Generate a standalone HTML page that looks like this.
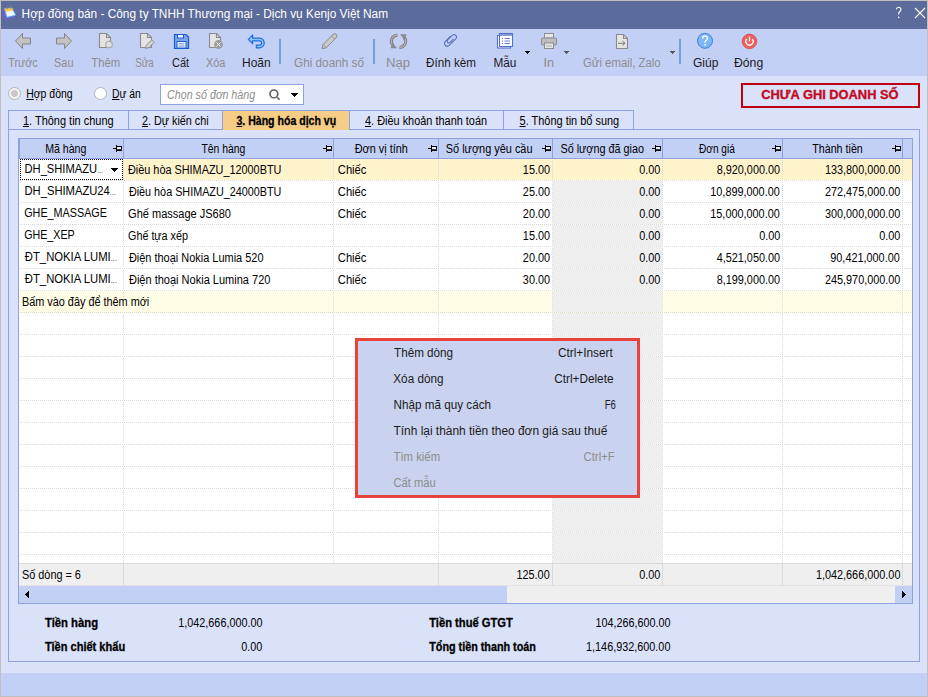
<!DOCTYPE html>
<html><head><meta charset="utf-8"><style>
html,body{margin:0;padding:0;width:928px;height:697px;overflow:hidden;background:#fff;}
body{position:relative;font-family:"Liberation Sans", sans-serif;}
.r{position:absolute;}
.t{position:absolute;white-space:nowrap;font-family:"Liberation Sans", sans-serif;}
u{text-decoration:underline;text-underline-offset:1px;}
</style></head><body>
<div class="r" style="left:0px;top:0px;width:928px;height:697px;background:#bfbfbf;"></div>
<div class="r" style="left:1px;top:1px;width:926px;height:28px;background:#5b6b9b;"></div>
<div class="r" style="left:1px;top:29px;width:926px;height:47px;background:#c3d0f6;"></div>
<div class="r" style="left:1px;top:76px;width:926px;height:597px;background:#dae2f9;"></div>
<div class="r" style="left:1px;top:673px;width:926px;height:23px;background:#c3d0f6;"></div>
<svg class="r" style="left:0px;top:0px" width="20" height="22" viewBox="0 0 20 22">
<path d="M3.3 8.6 L3.6 17.2 L6 19.9 L15.2 17.6 L12.5 15.5 Z" fill="#6f5bd8"/>
<path d="M4.4 8.5 L11.9 7.7 L16 15.3 L6.8 17.4 Z" fill="#eef4ff" stroke="#45a2ee" stroke-width="0.9"/>
<path d="M4.4 8.5 L11.9 7.7 L13.4 10.6 L5.6 11.8 Z" fill="#f6c842"/>
<path d="M6.2 9.2 Q5.6 5.4 7 5.4 Q8.2 5.5 7.7 8.9 M10.2 8.7 Q9.8 5 11.2 5.1 Q12.4 5.3 11.9 8.4" stroke="#7a7a7a" stroke-width="0.8" fill="none"/>
</svg>
<div class="t" id="tbfddfa17bc" style="left:22px;top:6.84px;font-size:12px;line-height:14px;color:#fff;font-weight:normal;transform:translateX(-0.39px) scaleX(0.9870);transform-origin:0 0;">Hợp đồng bán - Công ty TNHH Thương mại - Dịch vụ Kenjo Việt Nam</div>
<svg class="r" style="left:890px;top:0px" width="16" height="24" viewBox="890 0 16 24"><path d="M896.2 9.4 Q896.6 7.2 898.7 7.2 Q900.9 7.2 900.9 9.4 Q900.9 10.9 899.6 11.8 Q898.6 12.6 898.6 14.6" fill="none" stroke="#fff" stroke-width="1.1"/><rect x="898" y="16.6" width="1.3" height="1.5" fill="#fff"/></svg>
<svg class="r" style="left:914px;top:7px" width="12" height="12" viewBox="0 0 12 12"><path d="M1 1 L11 11 M11 1 L1 11" stroke="#fff" stroke-width="1.1"/></svg>
<div class="t" id="t17dea0146b" style="left:8px;top:55.84px;font-size:12px;line-height:14px;color:#8c8c8c;font-weight:normal;transform:translateX(0.30px) scaleX(0.8969);transform-origin:0 0;">Trước</div>
<div class="t" id="t330e1b755b" style="left:55px;top:55.84px;font-size:12px;line-height:14px;color:#8c8c8c;font-weight:normal;transform:translateX(-0.91px) scaleX(0.9100);transform-origin:0 0;">Sau</div>
<div class="t" id="tec5632794b" style="left:91px;top:55.84px;font-size:12px;line-height:14px;color:#8c8c8c;font-weight:normal;transform:translateX(0.30px) scaleX(0.9400);transform-origin:0 0;">Thêm</div>
<div class="t" id="t84d1a2b94b" style="left:136px;top:55.84px;font-size:12px;line-height:14px;color:#8c8c8c;font-weight:normal;transform:translateX(-0.82px) scaleX(0.8182);transform-origin:0 0;">Sửa</div>
<div class="t" id="tec8a192eca" style="left:172px;top:55.84px;font-size:12px;line-height:14px;color:#1a1a1a;font-weight:normal;transform:translateX(0.00px) scaleX(0.9105);transform-origin:0 0;">Cất</div>
<div class="t" id="t4f94497f70" style="left:206px;top:55.84px;font-size:12px;line-height:14px;color:#8c8c8c;font-weight:normal;transform:translateX(0.00px) scaleX(0.9048);transform-origin:0 0;">Xóa</div>
<div class="t" id="t210c2308ae" style="left:242px;top:55.84px;font-size:12px;line-height:14px;color:#1a1a1a;font-weight:normal;transform:translateX(0.00px) scaleX(1.0000);transform-origin:0 0;">Hoãn</div>
<div class="t" id="t3c45f9a0dc" style="left:294px;top:55.84px;font-size:12px;line-height:14px;color:#8c8c8c;font-weight:normal;transform:translateX(0.00px) scaleX(0.9803);transform-origin:0 0;">Ghi doanh số</div>
<div class="t" id="t939bacf14b" style="left:387px;top:55.84px;font-size:12px;line-height:14px;color:#8c8c8c;font-weight:normal;transform:translateX(-1.10px) scaleX(1.1000);transform-origin:0 0;">Nạp</div>
<div class="t" id="te5e6683cfd" style="left:426px;top:55.84px;font-size:12px;line-height:14px;color:#1a1a1a;font-weight:normal;transform:translateX(0.00px) scaleX(0.9745);transform-origin:0 0;">Đính kèm</div>
<div class="t" id="tc5a432ef92" style="left:493px;top:55.84px;font-size:12px;line-height:14px;color:#1a1a1a;font-weight:normal;transform:translateX(0.40px) scaleX(0.9826);transform-origin:0 0;">Mẫu</div>
<div class="t" id="t4fc5486b48" style="left:544px;top:55.84px;font-size:12px;line-height:14px;color:#8c8c8c;font-weight:normal;transform:translateX(-0.45px) scaleX(1.0500);transform-origin:0 0;">In</div>
<div class="t" id="t0ea93c2dd7" style="left:583px;top:55.84px;font-size:12px;line-height:14px;color:#8c8c8c;font-weight:normal;transform:translateX(0.00px) scaleX(0.9463);transform-origin:0 0;">Gửi email, Zalo</div>
<div class="t" id="teecc97d36f" style="left:693px;top:55.84px;font-size:12px;line-height:14px;color:#1a1a1a;font-weight:normal;transform:translateX(0.00px) scaleX(1.0000);transform-origin:0 0;">Giúp</div>
<div class="t" id="tece57bc070" style="left:734px;top:55.84px;font-size:12px;line-height:14px;color:#1a1a1a;font-weight:normal;transform:translateX(0.00px) scaleX(1.0179);transform-origin:0 0;">Đóng</div>
<div class="r" style="left:279px;top:39px;width:2px;height:25px;background:#72a0d9;"></div>
<div class="r" style="left:373px;top:39px;width:2px;height:25px;background:#72a0d9;"></div>
<div class="r" style="left:679px;top:39px;width:2px;height:25px;background:#72a0d9;"></div>
<svg class="r" style="left:0;top:0" width="928" height="76" viewBox="0 0 928 76">
<!-- prev arrow -->
<path d="M15.5 41 L22.5 33.5 L22.5 38 L30.5 38 L30.5 44 L22.5 44 L22.5 48.5 Z" fill="#c2c2c2" stroke="#868686" stroke-width="1"/>
<!-- next arrow -->
<path d="M71.5 41 L64.5 33.5 L64.5 38 L56.5 38 L56.5 44 L64.5 44 L64.5 48.5 Z" fill="#c2c2c2" stroke="#868686" stroke-width="1"/>
<!-- Them doc -->
<path d="M99.5 33.5 H106.5 L110.5 37.5 V47.5 H99.5 Z" fill="#e4e4e4" stroke="#8a8a8a" stroke-width="1.1"/>
<path d="M106.5 33.5 V37.5 H110.5" fill="none" stroke="#8a8a8a" stroke-width="1.1"/>
<circle cx="109" cy="44.6" r="3.3" fill="#e0e0e0" stroke="#a8a8a8" stroke-width="1.1"/>
<!-- Sua doc -->
<path d="M140.5 33.5 H147.5 L151.5 37.5 V47.5 H140.5 Z" fill="#e4e4e4" stroke="#8a8a8a" stroke-width="1.1"/>
<path d="M147.5 33.5 V37.5 H151.5" fill="none" stroke="#8a8a8a" stroke-width="1.1"/>
<path d="M145.6 48.4 L146.4 45.2 L151.8 39.8 L154.2 42.2 L148.8 47.6 Z" fill="#dcdcdc" stroke="#8c8c8c" stroke-width="1"/><path d="M147 45.5 L152.5 40" stroke="#a8a8a8" stroke-width="0.7"/>
<!-- Cat floppy -->
<path d="M174.5 34.5 H186 L188.5 37 V48.5 H174.5 Z" fill="#7ea6e6" stroke="#1b5ccc" stroke-width="1.2"/>
<rect x="177.5" y="34.5" width="6" height="3.5" fill="#ffffff" stroke="#1b5ccc" stroke-width="1"/>
<rect x="177" y="41.5" width="9" height="6.5" fill="#ffffff" stroke="#1b5ccc" stroke-width="1"/>
<path d="M178.5 43.8 H184.5 M178.5 46 H184.5" stroke="#3a78d8" stroke-width="0.9"/>
<!-- Xoa doc -->
<path d="M209.5 33.5 H216.5 L220.5 37.5 V47.5 H209.5 Z" fill="#e4e4e4" stroke="#8a8a8a" stroke-width="1.1"/>
<path d="M216.5 33.5 V37.5 H220.5" fill="none" stroke="#8a8a8a" stroke-width="1.1"/>
<circle cx="218.5" cy="44.5" r="4.4" fill="#9c9c9c"/>
<path d="M216.5 42.5 L220.5 46.5 M220.5 42.5 L216.5 46.5" stroke="#f0f0f0" stroke-width="1"/>
<!-- Hoan undo -->
<path d="M248.4 39.4 L252.6 35.2 L252.6 38.1 L259.4 38.1 A4.85 4.85 0 0 1 259.4 47.8 L256.3 47.8 L256.3 45.1 L259.4 45.1 A2.15 2.15 0 0 0 259.4 40.8 L252.6 40.8 L252.6 43.7 Z" fill="#92c3f8" stroke="#1d6ee0" stroke-width="1.15" stroke-linejoin="miter"/>
<!-- pencil -->
<path d="M322 48.5 L323 44.5 L333.5 34 Q335 33 336.5 34.5 Q337.5 36 336.5 37.5 L326 48 Z" fill="#c8c8c8" stroke="#8c8c8c" stroke-width="1"/>
<path d="M323.5 44.5 L326 47 M331.5 36 L334.5 39" stroke="#8c8c8c" stroke-width="0.8"/>
<!-- refresh -->
<path d="M397.5 35.2 A6 6 0 0 0 393.2 45.5" fill="none" stroke="#7e7e7e" stroke-width="3"/>
<path d="M397.5 35.2 A6 6 0 0 0 393.2 45.5" fill="none" stroke="#b4b4b4" stroke-width="1.2"/>
<path d="M390.5 48.3 L397 48.3 L392.5 42.8 Z" fill="#8a8a8a"/>
<path d="M399.5 47.4 A6 6 0 0 0 403.8 37.1" fill="none" stroke="#7e7e7e" stroke-width="3"/>
<path d="M399.5 47.4 A6 6 0 0 0 403.8 37.1" fill="none" stroke="#b4b4b4" stroke-width="1.2"/>
<path d="M406.5 34.3 L400 34.3 L404.5 39.8 Z" fill="#8a8a8a"/>
<!-- paperclip -->
<path d="M450.6 36.2 L445.4 41.4 Q443.5 43.5 445.3 45.5 Q447.2 47.3 449.2 45.4 L455.8 38.8 Q457.4 36.9 455.8 35.3 Q454 33.7 452.2 35.4 L447.7 39.9 Q446.5 41.3 447.6 42.5 Q448.8 43.6 450.1 42.4 L453.6 38.9" fill="none" stroke="#5a6ebd" stroke-width="1.05"/>
<!-- Mau -->
<rect x="497.5" y="35.5" width="13" height="12.5" fill="#ffffff" stroke="#5572c8" stroke-width="1.1"/>
<rect x="499.5" y="33.5" width="13" height="13" fill="#ffffff" stroke="#5572c8" stroke-width="1.1"/>
<path d="M499.5 35 H512.5" stroke="#5572c8" stroke-width="1.4"/>
<path d="M502 38.5 h1 M502 41 h1 M502 43.5 h1" stroke="#5572c8" stroke-width="1"/>
<path d="M504.5 38.5 H510 M504.5 41 H510 M504.5 43.5 H510" stroke="#5572c8" stroke-width="0.9"/>
<g fill="#000" shape-rendering="crispEdges"><rect x="525" y="51" width="5" height="1"/><rect x="526" y="52" width="3" height="1"/><rect x="527" y="53" width="1" height="1"/></g>
<!-- printer -->
<rect x="544.5" y="33.5" width="9" height="4.5" fill="#e6e6e6" stroke="#8c8c8c" stroke-width="1"/>
<rect x="541.5" y="38" width="15" height="7" rx="1" fill="#bdbdbd" stroke="#8c8c8c" stroke-width="1"/>
<rect x="544.5" y="43" width="9" height="5.5" fill="#e6e6e6" stroke="#8c8c8c" stroke-width="1"/>
<path d="M546 46 H552" stroke="#a0a0a0" stroke-width="0.8"/>
<g fill="#555" shape-rendering="crispEdges"><rect x="564" y="51" width="5" height="1"/><rect x="565" y="52" width="3" height="1"/><rect x="566" y="53" width="1" height="1"/></g>
<!-- send doc -->
<path d="M616.5 34.5 H623.5 L627.5 38.5 V48.5 H616.5 Z" fill="#e4e4e4" stroke="#8a8a8a" stroke-width="1.1"/>
<path d="M623.5 34.5 V38.5 H627.5" fill="none" stroke="#8a8a8a" stroke-width="1.1"/>
<path d="M618 43.3 H625 M622.5 41 L625 43.3 L622.5 45.6" fill="none" stroke="#7a7a7a" stroke-width="1"/>
<g fill="#555" shape-rendering="crispEdges"><rect x="670" y="51" width="5" height="1"/><rect x="671" y="52" width="3" height="1"/><rect x="672" y="53" width="1" height="1"/></g>
<!-- help -->
<circle cx="705" cy="40.8" r="7.5" fill="#7db6f6" stroke="#3c82da" stroke-width="1"/>
<path d="M702.6 38.6 Q702.6 36 705 36 Q707.4 36 707.4 38.4 Q707.4 39.8 705.8 40.6 Q705 41.2 705 42.8" fill="none" stroke="#fff" stroke-width="1.3"/>
<rect x="704.3" y="44" width="1.5" height="1.6" fill="#fff"/>
<!-- power -->
<circle cx="749.5" cy="41.4" r="7.3" fill="#ec6060" stroke="#d84848" stroke-width="0.8"/>
<path d="M746.9 39 A3.6 3.6 0 1 0 752.1 39" fill="none" stroke="#fff" stroke-width="1.3"/>
<path d="M749.5 36.5 V41.3" stroke="#fff" stroke-width="1.3"/>
</svg>
<svg class="r" style="left:8px;top:87px" width="13" height="13" viewBox="0 0 13 13"><circle cx="6.5" cy="6.5" r="6" fill="#f4f4f4" stroke="#b4b4b4"/><circle cx="6.5" cy="6.5" r="3.5" fill="#c8c8c8"/></svg>
<svg class="r" style="left:94px;top:87px" width="13" height="13" viewBox="0 0 13 13"><circle cx="6.5" cy="6.5" r="6" fill="#fff" stroke="#b4b4b4"/></svg>
<div class="t" id="t1623a203c4" style="left:26px;top:88.34px;font-size:12px;line-height:13px;color:#000;font-weight:normal;transform:translateX(0.20px) scaleX(0.8717);transform-origin:0 0;"><u>H</u>ợp đồng</div>
<div class="t" id="t753149d40e" style="left:112px;top:88.34px;font-size:12px;line-height:13px;color:#000;font-weight:normal;transform:translateX(0.00px) scaleX(0.8636);transform-origin:0 0;"><u>D</u>ự án</div>
<div class="r" style="left:160px;top:84px;width:144px;height:21px;background:#fff;box-sizing:border-box;border:1px solid #8fa2e0;"></div>
<div class="t" id="tb468f68ccc" style="left:167px;top:89.34px;font-size:12px;line-height:13px;color:#8c8c8c;font-weight:normal;font-style:italic;transform:translateX(0.00px) scaleX(0.8939);transform-origin:0 0;">Chọn số đơn hàng</div>
<svg class="r" style="left:268px;top:88px" width="14" height="14" viewBox="0 0 14 14"><circle cx="5.9" cy="5.9" r="3.9" fill="none" stroke="#5e5e5e" stroke-width="1.6"/><path d="M9.3 9.5 L11.6 11.7" stroke="#5e5e5e" stroke-width="1.6"/></svg>
<svg class="r" style="left:291px;top:93px" width="7" height="4" viewBox="0 0 7 4" shape-rendering="crispEdges"><rect x="0" y="0" width="7" height="1"/><rect x="1" y="1" width="5" height="1"/><rect x="2" y="2" width="3" height="1"/><rect x="3" y="3" width="1" height="1"/></svg>
<div class="r" style="left:741px;top:83px;width:179px;height:25px;background:transparent;box-sizing:border-box;border:2px solid #c00012;"></div>
<div class="t" id="t1f17f70e5e" style="left:761px;top:87.00px;font-size:13px;line-height:15px;color:#c30a1e;font-weight:bold;-webkit-text-stroke:0.35px currentColor;transform:translateX(0.30px) scaleX(0.9885);transform-origin:0 0;">CHƯA GHI DOANH SỐ</div>
<div class="r" style="left:8px;top:110px;width:626px;height:1px;background:#8fa2e0;"></div>
<div class="r" style="left:8px;top:129px;width:912px;height:1px;background:#8fa2e0;"></div>
<div class="r" style="left:8px;top:110px;width:1px;height:20px;background:#8fa2e0;"></div>
<div class="r" style="left:128px;top:110px;width:1px;height:20px;background:#8fa2e0;"></div>
<div class="r" style="left:222px;top:110px;width:1px;height:20px;background:#8fa2e0;"></div>
<div class="r" style="left:349px;top:110px;width:1px;height:20px;background:#8fa2e0;"></div>
<div class="r" style="left:503px;top:110px;width:1px;height:20px;background:#8fa2e0;"></div>
<div class="r" style="left:633px;top:110px;width:1px;height:20px;background:#8fa2e0;"></div>
<div class="r" style="left:223px;top:111px;width:126px;height:19px;background:#f6cd86;"></div>
<div class="t" id="td87f90e743" style="left:23px;top:115.34px;font-size:12px;line-height:13px;color:#000;font-weight:normal;transform:translateX(-0.10px) scaleX(0.9152);transform-origin:0 0;"><u>1</u>. Thông tin chung</div>
<div class="t" id="tcecb45ef3c" style="left:142px;top:115.34px;font-size:12px;line-height:13px;color:#000;font-weight:normal;transform:translateX(0.00px) scaleX(0.9000);transform-origin:0 0;"><u>2</u>. Dự kiến chi</div>
<div class="t" id="t67091df388" style="left:236px;top:115.34px;font-size:12px;line-height:13px;color:#000;font-weight:bold;-webkit-text-stroke:0.3px currentColor;transform:translateX(0.40px) scaleX(0.8800);transform-origin:0 0;"><u>3</u>. Hàng hóa dịch vụ</div>
<div class="t" id="t14f3e99549" style="left:365px;top:115.34px;font-size:12px;line-height:13px;color:#000;font-weight:normal;transform:translateX(0.00px) scaleX(0.9104);transform-origin:0 0;"><u>4</u>. Điều khoản thanh toán</div>
<div class="t" id="t0bf8f4ea2f" style="left:520px;top:115.34px;font-size:12px;line-height:13px;color:#000;font-weight:normal;transform:translateX(-0.40px) scaleX(0.9119);transform-origin:0 0;"><u>5</u>. Thông tin bổ sung</div>
<div class="r" style="left:8px;top:129px;width:1px;height:533px;background:#8fa2e0;"></div>
<div class="r" style="left:919px;top:129px;width:1px;height:533px;background:#8fa2e0;"></div>
<div class="r" style="left:8px;top:661px;width:912px;height:1px;background:#8fa2e0;"></div>
<div class="r" style="left:18px;top:138px;width:895px;height:466px;background:#8fa2e0;"></div>
<div class="r" style="left:19px;top:139px;width:893px;height:464px;background:#fff;"></div>
<div class="r" style="left:19px;top:139px;width:893px;height:19px;background:#c3d0f6;"></div>
<div class="r" style="left:19px;top:158px;width:893px;height:1px;background:#8fa2e0;"></div>
<div class="r" style="left:123px;top:139px;width:1px;height:19px;background:#8fa2e0;"></div>
<div class="r" style="left:333px;top:139px;width:1px;height:19px;background:#8fa2e0;"></div>
<div class="r" style="left:438px;top:139px;width:1px;height:19px;background:#8fa2e0;"></div>
<div class="r" style="left:552px;top:139px;width:1px;height:19px;background:#8fa2e0;"></div>
<div class="r" style="left:662px;top:139px;width:1px;height:19px;background:#8fa2e0;"></div>
<div class="r" style="left:782px;top:139px;width:1px;height:19px;background:#8fa2e0;"></div>
<div class="r" style="left:902px;top:139px;width:1px;height:19px;background:#8fa2e0;"></div>
<div class="r" style="left:19px;top:139px;width:1px;height:19px;background:#8fa2e0;"></div>
<div class="t" id="t840328dc9d" style="left:-134.5px;width:400px;text-align:center;top:143.34px;font-size:12px;line-height:13px;color:#000;font-weight:normal;transform:translateX(23.24px) scaleX(0.8826);transform-origin:0 0;">Mã hàng</div>
<svg class="r" style="left:113px;top:145px" width="9" height="7" viewBox="0 0 9 7" shape-rendering="crispEdges"><rect x="0" y="3" width="3" height="1" fill="#000"/><rect x="3" y="0" width="1" height="7" fill="#000"/><rect x="4" y="1" width="5" height="1" fill="#000"/><rect x="8" y="1" width="1" height="5" fill="#000"/><rect x="4" y="4" width="5" height="1" fill="#3a3a30"/><rect x="4" y="5" width="5" height="1" fill="#000"/><rect x="4" y="2" width="4" height="2" fill="#e4ecff"/></svg>
<div class="t" id="t464be18bdf" style="left:23.0px;width:400px;text-align:center;top:143.34px;font-size:12px;line-height:13px;color:#000;font-weight:normal;transform:translateX(27.10px) scaleX(0.8667);transform-origin:0 0;">Tên hàng</div>
<svg class="r" style="left:323px;top:145px" width="9" height="7" viewBox="0 0 9 7" shape-rendering="crispEdges"><rect x="0" y="3" width="3" height="1" fill="#000"/><rect x="3" y="0" width="1" height="7" fill="#000"/><rect x="4" y="1" width="5" height="1" fill="#000"/><rect x="8" y="1" width="1" height="5" fill="#000"/><rect x="4" y="4" width="5" height="1" fill="#3a3a30"/><rect x="4" y="5" width="5" height="1" fill="#000"/><rect x="4" y="2" width="4" height="2" fill="#e4ecff"/></svg>
<div class="t" id="t1e831977da" style="left:180.5px;width:400px;text-align:center;top:143.34px;font-size:12px;line-height:13px;color:#000;font-weight:normal;transform:translateX(18.58px) scaleX(0.9086);transform-origin:0 0;">Đơn vị tính</div>
<svg class="r" style="left:428px;top:145px" width="9" height="7" viewBox="0 0 9 7" shape-rendering="crispEdges"><rect x="0" y="3" width="3" height="1" fill="#000"/><rect x="3" y="0" width="1" height="7" fill="#000"/><rect x="4" y="1" width="5" height="1" fill="#000"/><rect x="8" y="1" width="1" height="5" fill="#000"/><rect x="4" y="4" width="5" height="1" fill="#3a3a30"/><rect x="4" y="5" width="5" height="1" fill="#000"/><rect x="4" y="2" width="4" height="2" fill="#e4ecff"/></svg>
<div class="t" id="tcab6306c13" style="left:290.0px;width:400px;text-align:center;top:143.34px;font-size:12px;line-height:13px;color:#000;font-weight:normal;transform:translateX(17.24px) scaleX(0.9096);transform-origin:0 0;">Số lượng yêu cầu</div>
<svg class="r" style="left:542px;top:145px" width="9" height="7" viewBox="0 0 9 7" shape-rendering="crispEdges"><rect x="0" y="3" width="3" height="1" fill="#000"/><rect x="3" y="0" width="1" height="7" fill="#000"/><rect x="4" y="1" width="5" height="1" fill="#000"/><rect x="8" y="1" width="1" height="5" fill="#000"/><rect x="4" y="4" width="5" height="1" fill="#3a3a30"/><rect x="4" y="5" width="5" height="1" fill="#000"/><rect x="4" y="2" width="4" height="2" fill="#e4ecff"/></svg>
<div class="t" id="t5c933d02f9" style="left:402.0px;width:400px;text-align:center;top:143.34px;font-size:12px;line-height:13px;color:#000;font-weight:normal;transform:translateX(19.77px) scaleX(0.9022);transform-origin:0 0;">Số lượng đã giao</div>
<svg class="r" style="left:652px;top:145px" width="9" height="7" viewBox="0 0 9 7" shape-rendering="crispEdges"><rect x="0" y="3" width="3" height="1" fill="#000"/><rect x="3" y="0" width="1" height="7" fill="#000"/><rect x="4" y="1" width="5" height="1" fill="#000"/><rect x="8" y="1" width="1" height="5" fill="#000"/><rect x="4" y="4" width="5" height="1" fill="#3a3a30"/><rect x="4" y="5" width="5" height="1" fill="#000"/><rect x="4" y="2" width="4" height="2" fill="#e4ecff"/></svg>
<div class="t" id="t774971e5c0" style="left:517.0px;width:400px;text-align:center;top:143.34px;font-size:12px;line-height:13px;color:#000;font-weight:normal;transform:translateX(31.72px) scaleX(0.8409);transform-origin:0 0;">Đơn giá</div>
<svg class="r" style="left:772px;top:145px" width="9" height="7" viewBox="0 0 9 7" shape-rendering="crispEdges"><rect x="0" y="3" width="3" height="1" fill="#000"/><rect x="3" y="0" width="1" height="7" fill="#000"/><rect x="4" y="1" width="5" height="1" fill="#000"/><rect x="8" y="1" width="1" height="5" fill="#000"/><rect x="4" y="4" width="5" height="1" fill="#3a3a30"/><rect x="4" y="5" width="5" height="1" fill="#000"/><rect x="4" y="2" width="4" height="2" fill="#e4ecff"/></svg>
<div class="t" id="t47ecf2176d" style="left:637.0px;width:400px;text-align:center;top:143.34px;font-size:12px;line-height:13px;color:#000;font-weight:normal;transform:translateX(21.90px) scaleX(0.8930);transform-origin:0 0;">Thành tiền</div>
<svg class="r" style="left:892px;top:145px" width="9" height="7" viewBox="0 0 9 7" shape-rendering="crispEdges"><rect x="0" y="3" width="3" height="1" fill="#000"/><rect x="3" y="0" width="1" height="7" fill="#000"/><rect x="4" y="1" width="5" height="1" fill="#000"/><rect x="8" y="1" width="1" height="5" fill="#000"/><rect x="4" y="4" width="5" height="1" fill="#3a3a30"/><rect x="4" y="5" width="5" height="1" fill="#000"/><rect x="4" y="2" width="4" height="2" fill="#e4ecff"/></svg>
<div class="r" style="left:553px;top:159px;width:109px;height:404px;background:#efefef;"></div>
<div class="r" style="left:19px;top:159px;width:893px;height:21px;background:#fff3cc;"></div>
<div class="r" style="left:19px;top:291px;width:534px;height:21px;background:#fffde5;"></div>
<div class="r" style="left:663px;top:291px;width:249px;height:21px;background:#fffde5;"></div>
<div class="r" style="left:123px;top:159px;width:1px;height:404px;background-image:linear-gradient(to bottom,transparent 50%,#dadada 50%);background-size:1px 2px;"></div>
<div class="r" style="left:333px;top:159px;width:1px;height:404px;background-image:linear-gradient(to bottom,transparent 50%,#dadada 50%);background-size:1px 2px;"></div>
<div class="r" style="left:438px;top:159px;width:1px;height:404px;background-image:linear-gradient(to bottom,transparent 50%,#dadada 50%);background-size:1px 2px;"></div>
<div class="r" style="left:552px;top:159px;width:1px;height:404px;background-image:linear-gradient(to bottom,transparent 50%,#dadada 50%);background-size:1px 2px;"></div>
<div class="r" style="left:662px;top:159px;width:1px;height:404px;background-image:linear-gradient(to bottom,transparent 50%,#dadada 50%);background-size:1px 2px;"></div>
<div class="r" style="left:782px;top:159px;width:1px;height:404px;background-image:linear-gradient(to bottom,transparent 50%,#dadada 50%);background-size:1px 2px;"></div>
<div class="r" style="left:902px;top:159px;width:1px;height:404px;background-image:linear-gradient(to bottom,transparent 50%,#dadada 50%);background-size:1px 2px;"></div>
<div class="r" style="left:19px;top:180px;width:893px;height:1px;background-image:linear-gradient(to right,#fff 50%,#dadada 50%);background-size:2px 1px;"></div>
<div class="r" style="left:19px;top:202px;width:893px;height:1px;background-image:linear-gradient(to right,#fff 50%,#dadada 50%);background-size:2px 1px;"></div>
<div class="r" style="left:19px;top:224px;width:893px;height:1px;background-image:linear-gradient(to right,#fff 50%,#dadada 50%);background-size:2px 1px;"></div>
<div class="r" style="left:19px;top:246px;width:893px;height:1px;background-image:linear-gradient(to right,#fff 50%,#dadada 50%);background-size:2px 1px;"></div>
<div class="r" style="left:19px;top:268px;width:893px;height:1px;background-image:linear-gradient(to right,#fff 50%,#dadada 50%);background-size:2px 1px;"></div>
<div class="r" style="left:19px;top:290px;width:893px;height:1px;background-image:linear-gradient(to right,#fff 50%,#dadada 50%);background-size:2px 1px;"></div>
<div class="r" style="left:19px;top:312px;width:893px;height:1px;background-image:linear-gradient(to right,#fffde5 50%,#dadada 50%);background-size:2px 1px;"></div>
<div class="r" style="left:19px;top:334px;width:893px;height:1px;background-image:linear-gradient(to right,#fff 50%,#dadada 50%);background-size:2px 1px;"></div>
<div class="r" style="left:19px;top:356px;width:893px;height:1px;background-image:linear-gradient(to right,#fff 50%,#dadada 50%);background-size:2px 1px;"></div>
<div class="r" style="left:19px;top:378px;width:893px;height:1px;background-image:linear-gradient(to right,#fff 50%,#dadada 50%);background-size:2px 1px;"></div>
<div class="r" style="left:19px;top:400px;width:893px;height:1px;background-image:linear-gradient(to right,#fff 50%,#dadada 50%);background-size:2px 1px;"></div>
<div class="r" style="left:19px;top:422px;width:893px;height:1px;background-image:linear-gradient(to right,#fff 50%,#dadada 50%);background-size:2px 1px;"></div>
<div class="r" style="left:19px;top:444px;width:893px;height:1px;background-image:linear-gradient(to right,#fff 50%,#dadada 50%);background-size:2px 1px;"></div>
<div class="r" style="left:19px;top:466px;width:893px;height:1px;background-image:linear-gradient(to right,#fff 50%,#dadada 50%);background-size:2px 1px;"></div>
<div class="r" style="left:19px;top:488px;width:893px;height:1px;background-image:linear-gradient(to right,#fff 50%,#dadada 50%);background-size:2px 1px;"></div>
<div class="r" style="left:19px;top:510px;width:893px;height:1px;background-image:linear-gradient(to right,#fff 50%,#dadada 50%);background-size:2px 1px;"></div>
<div class="r" style="left:19px;top:532px;width:893px;height:1px;background-image:linear-gradient(to right,#fff 50%,#dadada 50%);background-size:2px 1px;"></div>
<div class="r" style="left:19px;top:554px;width:893px;height:1px;background-image:linear-gradient(to right,#fff 50%,#dadada 50%);background-size:2px 1px;"></div>
<div class="r" style="left:19px;top:159px;width:104px;height:21px;background:#fff;"></div>
<div class="r" style="left:20px;top:159px;width:103px;height:21px;background:#fff;box-sizing:border-box;border:1px dotted #000;"></div>
<svg class="r" style="left:111px;top:168px" width="7" height="4" viewBox="0 0 7 4" shape-rendering="crispEdges"><rect x="0" y="0" width="7" height="1"/><rect x="1" y="1" width="5" height="1"/><rect x="2" y="2" width="3" height="1"/><rect x="3" y="3" width="1" height="1"/></svg>
<div class="t" id="t796c90af0b" style="left:23px;top:163.34px;font-size:12px;line-height:13px;color:#000;font-weight:normal;transform:translateX(1.50px) scaleX(0.9310);transform-origin:0 0;">DH_SHIMAZU<span style="font-size:7px;letter-spacing:0.3px">...</span></div>
<div class="t" id="tfb6e0d29bd" style="left:128px;top:164.34px;font-size:12px;line-height:13px;color:#000;font-weight:normal;transform:translateX(0.00px) scaleX(0.9053);transform-origin:0 0;">Điều hòa SHIMAZU_12000BTU</div>
<div class="t" id="td00db0eed8" style="left:338px;top:164.34px;font-size:12px;line-height:13px;color:#000;font-weight:normal;transform:translateX(-0.20px) scaleX(0.9323);transform-origin:0 0;">Chiếc</div>
<div class="t" id="tf34811f9df" style="right:378px;top:164.34px;font-size:12px;line-height:13px;color:#000;font-weight:normal;transform:scaleX(0.905);transform-origin:100% 0;">15.00</div>
<div class="t" id="t9f82d3646a" style="right:268px;top:164.34px;font-size:12px;line-height:13px;color:#000;font-weight:normal;transform:scaleX(0.905);transform-origin:100% 0;">0.00</div>
<div class="t" id="tebaca13c8e" style="right:148px;top:164.34px;font-size:12px;line-height:13px;color:#000;font-weight:normal;transform:scaleX(0.905);transform-origin:100% 0;">8,920,000.00</div>
<div class="t" id="tcd2e8d615b" style="right:28px;top:164.34px;font-size:12px;line-height:13px;color:#000;font-weight:normal;transform:scaleX(0.905);transform-origin:100% 0;">133,800,000.00</div>
<div class="t" id="t507cb9446c" style="left:23px;top:185.34px;font-size:12px;line-height:13px;color:#000;font-weight:normal;transform:translateX(1.50px) scaleX(0.9337);transform-origin:0 0;">DH_SHIMAZU24<span style="font-size:7px;letter-spacing:0.3px">...</span></div>
<div class="t" id="td41828f2e2" style="left:128px;top:186.34px;font-size:12px;line-height:13px;color:#000;font-weight:normal;transform:translateX(0.90px) scaleX(0.9000);transform-origin:0 0;">Điều hòa SHIMAZU_24000BTU</div>
<div class="t" id="t6321f03b91" style="left:338px;top:186.34px;font-size:12px;line-height:13px;color:#000;font-weight:normal;transform:translateX(-0.20px) scaleX(0.9323);transform-origin:0 0;">Chiếc</div>
<div class="t" id="t0372b3735e" style="right:378px;top:186.34px;font-size:12px;line-height:13px;color:#000;font-weight:normal;transform:scaleX(0.905);transform-origin:100% 0;">25.00</div>
<div class="t" id="t22787fb919" style="right:268px;top:186.34px;font-size:12px;line-height:13px;color:#000;font-weight:normal;transform:scaleX(0.905);transform-origin:100% 0;">0.00</div>
<div class="t" id="tdf31fc30ee" style="right:148px;top:186.34px;font-size:12px;line-height:13px;color:#000;font-weight:normal;transform:scaleX(0.905);transform-origin:100% 0;">10,899,000.00</div>
<div class="t" id="t7d1f59f4e1" style="right:28px;top:186.34px;font-size:12px;line-height:13px;color:#000;font-weight:normal;transform:scaleX(0.905);transform-origin:100% 0;">272,475,000.00</div>
<div class="t" id="tc973717e44" style="left:23px;top:207.34px;font-size:12px;line-height:13px;color:#000;font-weight:normal;transform:translateX(1.20px) scaleX(0.8989);transform-origin:0 0;">GHE_MASSAGE</div>
<div class="t" id="t349dbcc704" style="left:128px;top:208.34px;font-size:12px;line-height:13px;color:#000;font-weight:normal;transform:translateX(0.10px) scaleX(0.9179);transform-origin:0 0;">Ghế massage JS680</div>
<div class="t" id="t5fd17d5e72" style="left:338px;top:208.34px;font-size:12px;line-height:13px;color:#000;font-weight:normal;transform:translateX(-0.20px) scaleX(0.9323);transform-origin:0 0;">Chiếc</div>
<div class="t" id="tef72b112e9" style="right:378px;top:208.34px;font-size:12px;line-height:13px;color:#000;font-weight:normal;transform:scaleX(0.905);transform-origin:100% 0;">20.00</div>
<div class="t" id="t8a30107b25" style="right:268px;top:208.34px;font-size:12px;line-height:13px;color:#000;font-weight:normal;transform:scaleX(0.905);transform-origin:100% 0;">0.00</div>
<div class="t" id="ta5d19f1122" style="right:148px;top:208.34px;font-size:12px;line-height:13px;color:#000;font-weight:normal;transform:scaleX(0.905);transform-origin:100% 0;">15,000,000.00</div>
<div class="t" id="t15851d5bb6" style="right:28px;top:208.34px;font-size:12px;line-height:13px;color:#000;font-weight:normal;transform:scaleX(0.905);transform-origin:100% 0;">300,000,000.00</div>
<div class="t" id="tf0c850022f" style="left:23px;top:229.34px;font-size:12px;line-height:13px;color:#000;font-weight:normal;transform:translateX(1.20px) scaleX(0.8895);transform-origin:0 0;">GHE_XEP</div>
<div class="t" id="t7c00585598" style="left:128px;top:230.34px;font-size:12px;line-height:13px;color:#000;font-weight:normal;transform:translateX(0.00px) scaleX(0.8985);transform-origin:0 0;">Ghế tựa xếp</div>
<div class="t" id="t93d11c7d87" style="right:378px;top:230.34px;font-size:12px;line-height:13px;color:#000;font-weight:normal;transform:scaleX(0.905);transform-origin:100% 0;">15.00</div>
<div class="t" id="t4095de7651" style="right:268px;top:230.34px;font-size:12px;line-height:13px;color:#000;font-weight:normal;transform:scaleX(0.905);transform-origin:100% 0;">0.00</div>
<div class="t" id="t2e0819ef6e" style="right:148px;top:230.34px;font-size:12px;line-height:13px;color:#000;font-weight:normal;transform:scaleX(0.905);transform-origin:100% 0;">0.00</div>
<div class="t" id="t8ed4c0b771" style="right:28px;top:230.34px;font-size:12px;line-height:13px;color:#000;font-weight:normal;transform:scaleX(0.905);transform-origin:100% 0;">0.00</div>
<div class="t" id="ta0b4548dd6" style="left:23px;top:251.34px;font-size:12px;line-height:13px;color:#000;font-weight:normal;transform:translateX(1.84px) scaleX(0.9394);transform-origin:0 0;">ĐT_NOKIA LUMI<span style="font-size:7px;letter-spacing:0.3px">...</span></div>
<div class="t" id="t08d1d6c589" style="left:128px;top:252.34px;font-size:12px;line-height:13px;color:#000;font-weight:normal;transform:translateX(0.91px) scaleX(0.9128);transform-origin:0 0;">Điện thoại Nokia Lumia 520</div>
<div class="t" id="t2f68adbd75" style="left:338px;top:252.34px;font-size:12px;line-height:13px;color:#000;font-weight:normal;transform:translateX(-0.20px) scaleX(0.9323);transform-origin:0 0;">Chiếc</div>
<div class="t" id="t2fe327606d" style="right:378px;top:252.34px;font-size:12px;line-height:13px;color:#000;font-weight:normal;transform:scaleX(0.905);transform-origin:100% 0;">20.00</div>
<div class="t" id="tcdd728c8d0" style="right:268px;top:252.34px;font-size:12px;line-height:13px;color:#000;font-weight:normal;transform:scaleX(0.905);transform-origin:100% 0;">0.00</div>
<div class="t" id="tdea8304513" style="right:148px;top:252.34px;font-size:12px;line-height:13px;color:#000;font-weight:normal;transform:scaleX(0.905);transform-origin:100% 0;">4,521,050.00</div>
<div class="t" id="t6f1e9508ed" style="right:28px;top:252.34px;font-size:12px;line-height:13px;color:#000;font-weight:normal;transform:scaleX(0.905);transform-origin:100% 0;">90,421,000.00</div>
<div class="t" id="te798b3c840" style="left:23px;top:273.34px;font-size:12px;line-height:13px;color:#000;font-weight:normal;transform:translateX(1.84px) scaleX(0.9394);transform-origin:0 0;">ĐT_NOKIA LUMI<span style="font-size:7px;letter-spacing:0.3px">...</span></div>
<div class="t" id="td246f13ef4" style="left:128px;top:274.34px;font-size:12px;line-height:13px;color:#000;font-weight:normal;transform:translateX(0.92px) scaleX(0.9181);transform-origin:0 0;">Điện thoại Nokia Lumina 720</div>
<div class="t" id="te87ee9111b" style="left:338px;top:274.34px;font-size:12px;line-height:13px;color:#000;font-weight:normal;transform:translateX(-0.20px) scaleX(0.9323);transform-origin:0 0;">Chiếc</div>
<div class="t" id="t40aa6a2d94" style="right:378px;top:274.34px;font-size:12px;line-height:13px;color:#000;font-weight:normal;transform:scaleX(0.905);transform-origin:100% 0;">30.00</div>
<div class="t" id="t2c999979e2" style="right:268px;top:274.34px;font-size:12px;line-height:13px;color:#000;font-weight:normal;transform:scaleX(0.905);transform-origin:100% 0;">0.00</div>
<div class="t" id="tf80446b63f" style="right:148px;top:274.34px;font-size:12px;line-height:13px;color:#000;font-weight:normal;transform:scaleX(0.905);transform-origin:100% 0;">8,199,000.00</div>
<div class="t" id="tea535cd133" style="right:28px;top:274.34px;font-size:12px;line-height:13px;color:#000;font-weight:normal;transform:scaleX(0.905);transform-origin:100% 0;">245,970,000.00</div>
<div class="t" id="t4b1e618fd4" style="left:22px;top:296.34px;font-size:12px;line-height:13px;color:#000;font-weight:normal;transform:scaleX(0.905);transform-origin:0 0;">Bấm vào đây để thêm mới</div>
<div class="r" style="left:19px;top:563px;width:893px;height:1px;background:#dadada;"></div>
<div class="r" style="left:19px;top:564px;width:893px;height:22px;background:#efefef;"></div>
<div class="r" style="left:123px;top:564px;width:1px;height:22px;background:#dadada;"></div>
<div class="r" style="left:438px;top:564px;width:1px;height:22px;background:#dadada;"></div>
<div class="r" style="left:552px;top:564px;width:1px;height:22px;background:#dadada;"></div>
<div class="r" style="left:662px;top:564px;width:1px;height:22px;background:#dadada;"></div>
<div class="r" style="left:782px;top:564px;width:1px;height:22px;background:#dadada;"></div>
<div class="r" style="left:902px;top:564px;width:1px;height:22px;background:#dadada;"></div>
<div class="t" id="tc240b827ac" style="left:22px;top:569.34px;font-size:12px;line-height:13px;color:#000;font-weight:normal;transform:scaleX(0.905);transform-origin:0 0;">Số dòng = 6</div>
<div class="t" id="t8d7740e004" style="right:378px;top:569.34px;font-size:12px;line-height:13px;color:#000;font-weight:normal;transform:scaleX(0.905);transform-origin:100% 0;">125.00</div>
<div class="t" id="t2b3438443c" style="right:268px;top:569.34px;font-size:12px;line-height:13px;color:#000;font-weight:normal;transform:scaleX(0.905);transform-origin:100% 0;">0.00</div>
<div class="t" id="t16a29c5620" style="right:28px;top:569.34px;font-size:12px;line-height:13px;color:#000;font-weight:normal;transform:scaleX(0.905);transform-origin:100% 0;">1,042,666,000.00</div>
<div class="r" style="left:19px;top:585px;width:893px;height:1px;background:#e3e3e3;"></div>
<div class="r" style="left:19px;top:586px;width:893px;height:17px;background:#efefef;"></div>
<div class="r" style="left:19px;top:586px;width:488px;height:17px;background:#c3d0f6;"></div>
<div class="r" style="left:895px;top:586px;width:17px;height:17px;background:#c3d0f6;"></div>
<svg class="r" style="left:25px;top:591px" width="4" height="7" viewBox="0 0 4 7" shape-rendering="crispEdges"><rect x="3" y="0" width="1" height="7"/><rect x="2" y="1" width="1" height="5"/><rect x="1" y="2" width="1" height="3"/><rect x="0" y="3" width="1" height="1"/></svg>
<svg class="r" style="left:902px;top:591px" width="4" height="7" viewBox="0 0 4 7" shape-rendering="crispEdges"><rect x="0" y="0" width="1" height="7"/><rect x="1" y="1" width="1" height="5"/><rect x="2" y="2" width="1" height="3"/><rect x="3" y="3" width="1" height="1"/></svg>
<div class="t" id="t6c3ab6be07" style="left:44px;top:617.34px;font-size:12px;line-height:13px;color:#000;font-weight:bold;-webkit-text-stroke:0.3px currentColor;transform:translateX(1.04px) scaleX(0.9386);transform-origin:0 0;">Tiền hàng</div>
<div class="t" id="tb3a379070b" style="right:666px;top:617.34px;font-size:12px;line-height:13px;color:#000;font-weight:normal;transform:translateX(9.34px) scaleX(0.9000);transform-origin:0 0;">1,042,666,000.00</div>
<div class="t" id="tf338d93300" style="left:44px;top:641.34px;font-size:12px;line-height:13px;color:#000;font-weight:bold;-webkit-text-stroke:0.3px currentColor;transform:translateX(0.92px) scaleX(0.9205);transform-origin:0 0;">Tiền chiết khấu</div>
<div class="t" id="tc083845ff5" style="right:666px;top:641.34px;font-size:12px;line-height:13px;color:#000;font-weight:normal;transform:scaleX(0.905);transform-origin:100% 0;">0.00</div>
<div class="t" id="t8f42adce7c" style="left:428px;top:617.34px;font-size:12px;line-height:13px;color:#000;font-weight:bold;-webkit-text-stroke:0.3px currentColor;transform:translateX(1.23px) scaleX(0.9308);transform-origin:0 0;">Tiền thuế GTGT</div>
<div class="t" id="ta8a2727c0c" style="right:258px;top:617.34px;font-size:12px;line-height:13px;color:#000;font-weight:normal;transform:translateX(8.54px) scaleX(0.8976);transform-origin:0 0;">104,266,600.00</div>
<div class="t" id="td46f236fe3" style="left:428px;top:641.34px;font-size:12px;line-height:13px;color:#000;font-weight:bold;-webkit-text-stroke:0.3px currentColor;transform:translateX(1.20px) scaleX(0.8992);transform-origin:0 0;">Tổng tiền thanh toán</div>
<div class="t" id="tbdb6189cc5" style="right:258px;top:641.34px;font-size:12px;line-height:13px;color:#000;font-weight:normal;transform:translateX(9.04px) scaleX(0.9032);transform-origin:0 0;">1,146,932,600.00</div>
<div class="r" style="left:355px;top:338px;width:285px;height:160px;background:#e6433c;"></div>
<div class="r" style="left:358px;top:341px;width:279px;height:154px;background:#c9d3ef;"></div>
<div class="t" id="t21f6d9cfa6" style="left:393px;top:345.84px;font-size:12px;line-height:14px;color:#1a1a1a;font-weight:normal;transform:translateX(1.00px) scaleX(0.9733);transform-origin:0 0;">Thêm dòng</div>
<div class="t" id="t04571bb4a7" style="right:312px;top:345.84px;font-size:12px;line-height:14px;color:#1a1a1a;font-weight:normal;transform:translateX(-2.10px) scaleX(0.9857);transform-origin:0 0;">Ctrl+Insert</div>
<div class="t" id="tdb1a91f5c6" style="left:393px;top:371.84px;font-size:12px;line-height:14px;color:#1a1a1a;font-weight:normal;transform:translateX(0.30px) scaleX(0.9765);transform-origin:0 0;">Xóa dòng</div>
<div class="t" id="t88776c1470" style="right:312px;top:371.84px;font-size:12px;line-height:14px;color:#1a1a1a;font-weight:normal;transform:translateX(-1.69px) scaleX(0.9800);transform-origin:0 0;">Ctrl+Delete</div>
<div class="t" id="te49c45941f" style="left:393px;top:397.84px;font-size:12px;line-height:14px;color:#1a1a1a;font-weight:normal;transform:translateX(0.50px) scaleX(0.9750);transform-origin:0 0;">Nhập mã quy cách</div>
<div class="t" id="t3b08a9e11a" style="right:312px;top:397.84px;font-size:12px;line-height:14px;color:#1a1a1a;font-weight:normal;transform:translateX(2.80px) scaleX(0.7929);transform-origin:0 0;">F6</div>
<div class="t" id="t990d9f4317" style="left:393px;top:423.84px;font-size:12px;line-height:14px;color:#1a1a1a;font-weight:normal;transform:translateX(0.50px) scaleX(0.9926);transform-origin:0 0;">Tính lại thành tiền theo đơn giá sau thuế</div>
<div class="t" id="t37b055d402" style="left:393px;top:449.84px;font-size:12px;line-height:14px;color:#8c8c8c;font-weight:normal;transform:translateX(0.50px) scaleX(0.9449);transform-origin:0 0;">Tìm kiếm</div>
<div class="t" id="tdd5385a08f" style="right:312px;top:449.84px;font-size:12px;line-height:14px;color:#8c8c8c;font-weight:normal;transform:translateX(0.60px) scaleX(0.9394);transform-origin:0 0;">Ctrl+F</div>
<div class="t" id="tc7e51de766" style="left:393px;top:475.84px;font-size:12px;line-height:14px;color:#8c8c8c;font-weight:normal;transform:translateX(0.50px) scaleX(0.9311);transform-origin:0 0;">Cất mẫu</div>

</body></html>
